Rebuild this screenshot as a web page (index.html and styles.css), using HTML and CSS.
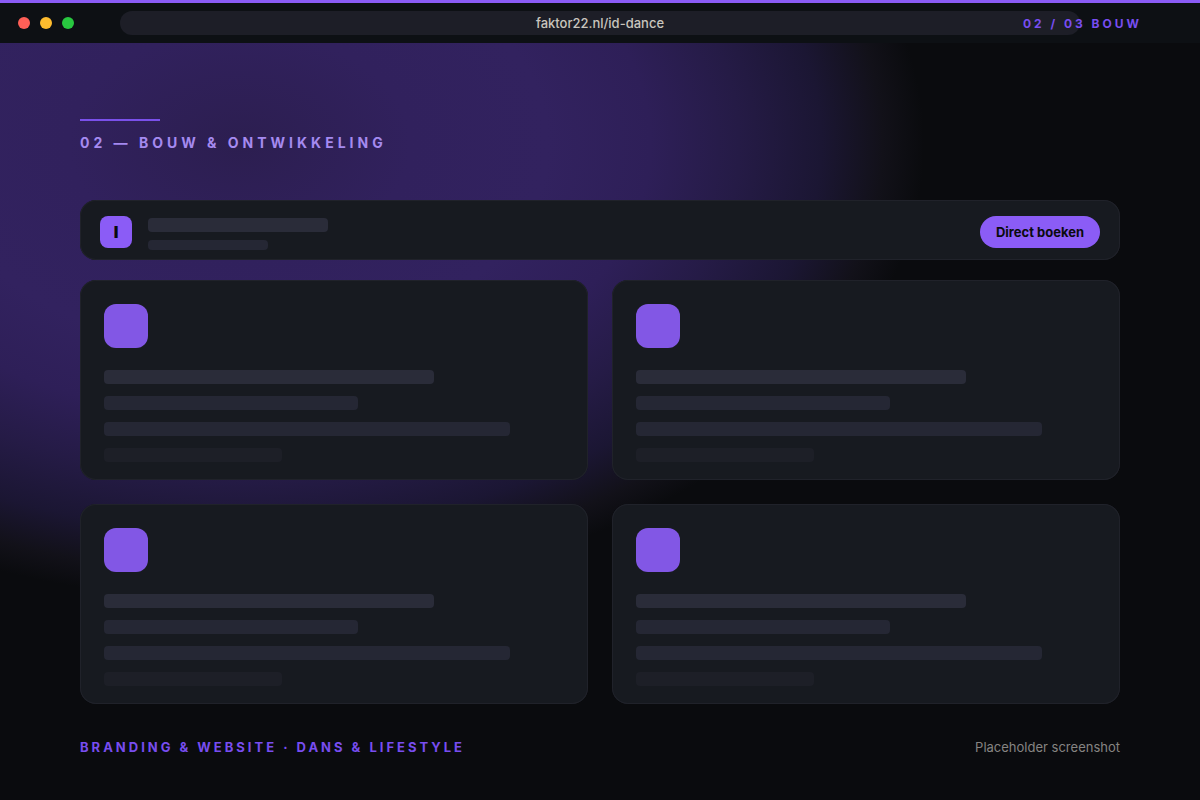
FILE: index.html
```html
<!DOCTYPE html>
<html lang="nl">
  <head>
    <meta charset="UTF-8" />
    <meta name="viewport" content="width=device-width, initial-scale=1.0" />
    <title>ID Dance - Bouw &amp; ontwikkeling</title>
    <link rel="stylesheet" href="styles.css">
  </head>
  <body>
    <header class="browser-bar">
      <div class="dots">
        <span class="dot red"></span>
        <span class="dot yellow"></span>
        <span class="dot green"></span>
      </div>
      <input
        class="address"
        type="text"
        value="faktor22.nl/id-dance"
        aria-label="Adres"
      />
      <span class="step">02 / 03 BOUW</span>
    </header>

    <main class="content">
      <h1 class="title">02 — BOUW &amp; ONTWIKKELING</h1>

      <nav class="site-nav">
        <span class="logo">I</span>
        <div class="nav-lines">
          <div class="line nav-name"></div>
          <div class="line nav-sub"></div>
        </div>
        <button class="book" type="button">Direct boeken</button>
      </nav>

      <section class="cards">
        <article class="card">
          <div class="icon"></div>
          <div class="line w65"></div>
          <div class="line w50"></div>
          <div class="line w80"></div>
          <div class="line w35"></div>
        </article>
        <article class="card">
          <div class="icon"></div>
          <div class="line w65"></div>
          <div class="line w50"></div>
          <div class="line w80"></div>
          <div class="line w35"></div>
        </article>
        <article class="card">
          <div class="icon"></div>
          <div class="line w65"></div>
          <div class="line w50"></div>
          <div class="line w80"></div>
          <div class="line w35"></div>
        </article>
        <article class="card">
          <div class="icon"></div>
          <div class="line w65"></div>
          <div class="line w50"></div>
          <div class="line w80"></div>
          <div class="line w35"></div>
        </article>
      </section>

      <footer class="footer">
        <span class="tagline">BRANDING &amp; WEBSITE · DANS &amp; LIFESTYLE</span>
        <span class="note">Placeholder screenshot</span>
      </footer>
    </main>
  </body>
</html>
```

FILE: styles.css
```css
* {
  box-sizing: border-box;
}
body {
  margin: 0;
  min-height: 100vh;
  font-family: Inter, "Liberation Sans", sans-serif;
  font-size: 13px;
  color: #b8b4ae;
  background: #0a0b0e
    radial-gradient(
      ellipse 57% 57% at 20% 18%,
      #2c1e50 0%,
      #31215d 25%,
      #32225f 45%,
      #2e1f58 60%,
      #251b46 73%,
      #1b1633 85%,
      #121119 94%,
      #0a0b0e 100%
    )
    no-repeat;
}

/* browser bar */
.browser-bar {
  position: relative;
  display: grid;
  grid-template-columns: 120px 1fr 120px;
  align-items: center;
  height: 43px;
  border-top: 3px solid #8b5cf6;
  background: #0d1014;
}
.dots {
  display: flex;
  gap: 10px;
  padding-left: 18px;
}
.dot {
  width: 12px;
  height: 12px;
  border-radius: 50%;
}
.red {
  background: #ff5f57;
}
.yellow {
  background: #febc2e;
}
.green {
  background: #28c840;
}
.address {
  width: 100%;
  height: 24px;
  padding: 0 12px;
  border: none;
  border-radius: 12px;
  background: #1d1e27;
  color: #c9c5be;
  font: inherit;
  font-weight: 500;
  text-align: center;
}
.step {
  position: absolute;
  right: 58px;
  color: #784df0;
  font-size: 12px;
  font-weight: 700;
  letter-spacing: 3px;
}

/* page */
.content {
  padding: 76px 80px 40px;
}
.title {
  margin: 0 0 49px;
  color: #a58af0;
  font-size: 14px;
  font-weight: 700;
  line-height: 16px;
  letter-spacing: 4px;
}
.title::before {
  content: "";
  display: block;
  width: 80px;
  height: 2px;
  margin-bottom: 14px;
  background: #7a50ea;
}
.site-nav,
.card {
  border-radius: 16px;
  background: #171a20;
  box-shadow: inset 0 0 0 1px #20222a;
}
.site-nav {
  display: flex;
  align-items: center;
  gap: 16px;
  height: 60px;
  margin-bottom: 20px;
  padding: 4px 20px 0;
}
.logo {
  width: 32px;
  height: 32px;
  border-radius: 8px;
  background: #8b5cf6;
  color: #0a0b0e;
  font-size: 16px;
  font-weight: 900;
  line-height: 32px;
  text-align: center;
}
.line {
  height: 14px;
  border-radius: 4px;
  background: #252734;
}
.nav-lines {
  flex: 1;
  padding-top: 4px;
}
.nav-name {
  width: 180px;
  margin-bottom: 8px;
  background: #2a2c39;
}
.nav-sub {
  width: 120px;
  height: 10px;
}
.book {
  width: 120px;
  height: 32px;
  padding: 0;
  border: none;
  border-radius: 16px;
  background: #8b5cf6;
  color: #0a0b0e;
  font: inherit;
  font-weight: 700;
}

/* cards */
.cards {
  display: grid;
  grid-template-columns: 1fr 1fr;
  gap: 24px;
}
.card {
  display: flex;
  flex-direction: column;
  gap: 12px;
  padding: 24px 0 18px;
}
.card .icon,
.card .line {
  margin-left: 24px;
}
.icon {
  width: 44px;
  height: 44px;
  margin-bottom: 10px;
  border-radius: 12px;
  background: #8257e5;
}
.w65 {
  width: 65%;
  background: #2a2c39;
}
.w50 {
  width: 50%;
}
.w80 {
  width: 80%;
}
.w35 {
  width: 35%;
  background: #1d1f27;
}

.footer {
  display: flex;
  justify-content: space-between;
  align-items: center;
  margin-top: 35px;
  line-height: 16px;
}
.tagline {
  color: #784df0;
  font-weight: 700;
  letter-spacing: 3px;
}
.note {
  color: #868482;
}
```
